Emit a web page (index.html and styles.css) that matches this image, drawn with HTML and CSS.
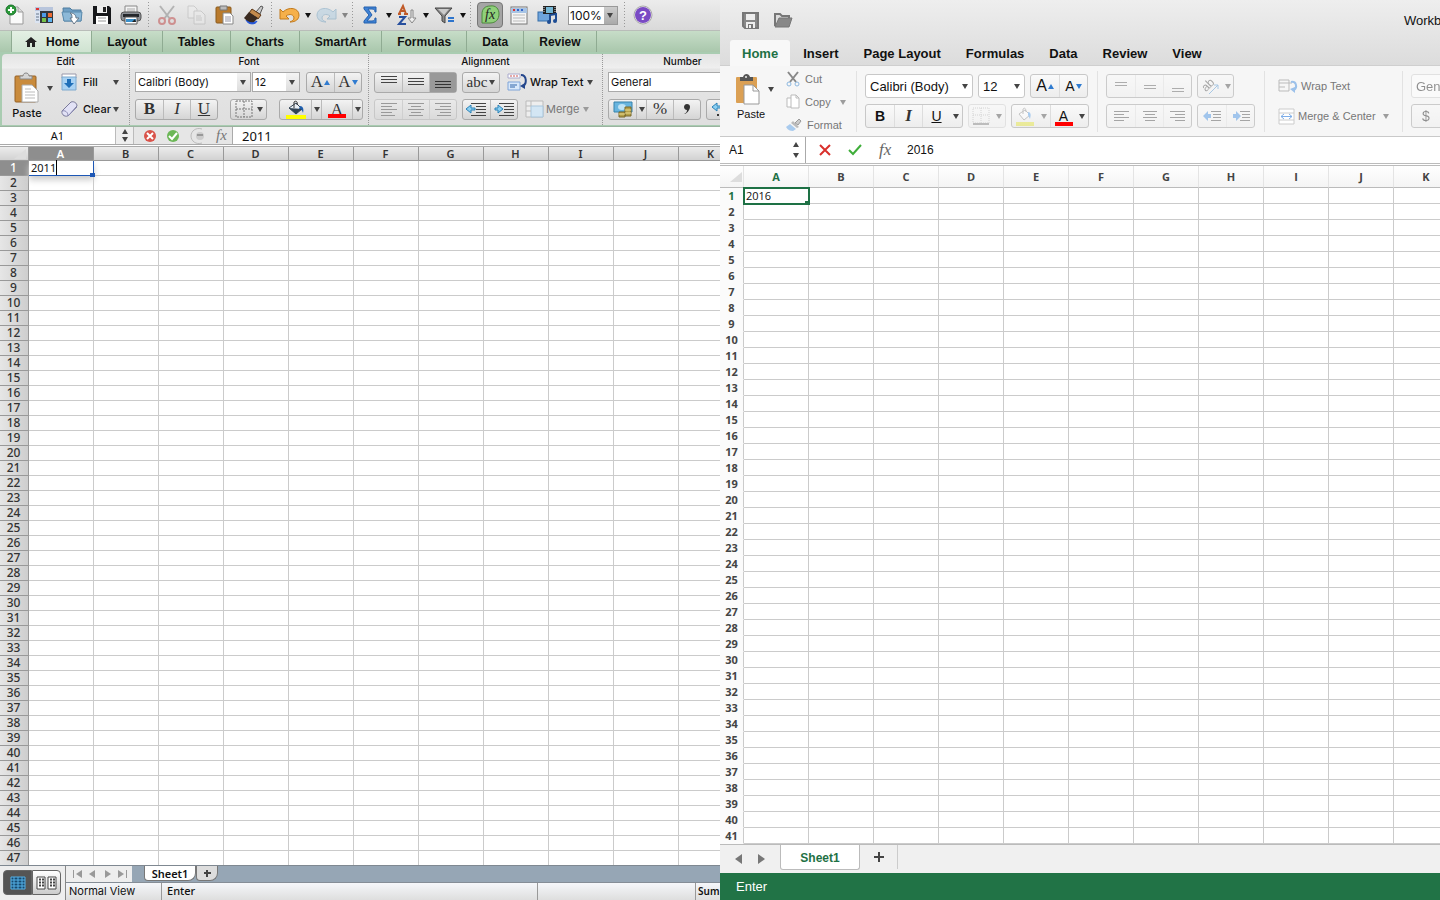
FILE: index.html
```
<!DOCTYPE html>
<html lang="en">
<head>
    <meta charset="UTF-8">
    <meta name="viewport" content="width=device-width, initial-scale=1.0">
    <title>Excel 2011 / Excel 2016</title>
    <link rel="stylesheet" href="styles.css">
</head>
<body>
    <!-- Excel 2011 -->
    <section class="pane old">
        <div class="toolbar">
            <button class="tool" aria-label="New"><svg width="20" height="20" viewBox="0 0 20 20"><path d="M5 2h8l5 5v12H5z" fill="#fafafa" stroke="#999"/><path d="M13 2v5h5" fill="#ddd" stroke="#999"/><circle cx="6" cy="5" r="5" fill="#2c9b3a" stroke="#17702a"/><path d="M6 2v6M3 5h6" stroke="#fff" stroke-width="2"/></svg></button>
            <button class="tool" aria-label="Gallery"><svg width="20" height="20" viewBox="0 0 20 20"><rect x="1" y="2" width="18" height="16" fill="#34363c"/><path d="M1 2h18v4H1z" fill="#b8c5dc"/><path d="M2 3h3v2H2z" fill="#d33"/><path d="M1 6h5v12H1z" fill="#dbe4f2"/><path d="M2 9h3M2 12h3M2 15h3" stroke="#678"/><path d="M8 8h4v4H8z" fill="#4e9be8"/><path d="M14 8h4v4h-4z" fill="#ee6b32"/><path d="M8 13h4v4H8z" fill="#76c24a"/><path d="M14 13h4v4h-4z" fill="#5cb3ee"/></svg></button>
            <button class="tool" aria-label="Open"><svg width="21" height="20" viewBox="0 0 21 20"><path d="M1 3h7l2 2h9v11H2z" fill="#6f9fc4" stroke="#4f7d9f"/><path d="M0 7h20l-1 9H2z" fill="#8db9d8" stroke="#5c8bad"/><path d="M8 8c4 0 6 2 6 5h3l-5 6-4-6h2c0-2 0-4-2-5z" fill="#fff" stroke="#678"/></svg></button>
            <button class="tool" aria-label="Save"><svg width="20" height="20" viewBox="0 0 20 20"><path d="M1 1h16l2 2v16H1z" fill="#17181b"/><path d="M5 1h10v7H5z" fill="#eee"/><path d="M11 2h3v5h-3z" fill="#222"/><path d="M4 11h12v8H4z" fill="#fff"/><path d="M6 13h8M6 16h8" stroke="#999"/></svg></button>
            <button class="tool" aria-label="Print"><svg width="22" height="20" viewBox="0 0 22 20"><path d="M5 1h12v7H5z" fill="#f4f4f4" stroke="#888"/><path d="M7 4h8M7 6h8" stroke="#aaa"/><rect x="1" y="7" width="20" height="9" rx="3" fill="#8b8f94" stroke="#555"/><path d="M3 9h16v3H3z" fill="#24272b"/><path d="M5 12h12v7H5z" fill="#fff" stroke="#555"/><path d="M6 14h10v3H6z" fill="#3a91cc"/><path d="M12 17l3-3 1 3z" fill="#222"/></svg></button>
            <span class="sep"></span>
            <button class="tool faded" aria-label="Cut"><svg width="20" height="20" viewBox="0 0 20 20" fill="none"><path d="M3 1l10 13M17 1L7 14" stroke="#777" stroke-width="2"/><circle cx="5" cy="16" r="3" stroke="#b33" stroke-width="2"/><circle cx="15" cy="16" r="3" stroke="#b33" stroke-width="2"/></svg></button>
            <button class="tool faded" aria-label="Copy"><svg width="20" height="20" viewBox="0 0 20 20" fill="#eee" stroke="#aaa"><path d="M2 1h6l3 3v9H2z"/><path d="M8 6h7l4 4v9H8z"/><path d="M10 11h5M10 13h6M10 15h6"/></svg></button>
            <button class="tool" aria-label="Paste"><svg width="20" height="20" viewBox="0 0 20 20"><rect x="1" y="2" width="15" height="16" rx="1" fill="#b97a2c" stroke="#8a5a1d"/><path d="M5 1h7v4H5z" fill="#bbb" stroke="#777"/><path d="M8 8h7l3 3v8H8z" fill="#fff" stroke="#888"/><path d="M10 12h6M10 14h6M10 16h6" stroke="#99a"/></svg></button>
            <button class="tool" aria-label="Format painter"><svg width="21" height="20" viewBox="0 0 21 20"><path d="M13 7l5-6 2 1-3 7z" fill="#ccc" stroke="#555"/><path d="M3 15c4 2 9 3 11 1-1 4-9 4-11-1z" fill="#2456d8" stroke="#2456d8"/><path d="M9 4l9 6-3 4-9-6z" fill="#c48a4c" stroke="#5c3616"/><path d="M6 7l9 6-4 4c-4 1-7-1-10-4z" fill="#3a2a20"/></svg></button>
            <span class="sep"></span>
            <button class="tool narrow" aria-label="Undo"><svg width="21" height="18" viewBox="0 0 21 18"><path d="M1 3v10h9l-3-3c4-3 8-1 8 2 0 2-2 3-4 4 6 0 9-3 9-7C20 2 10 0 4 6z" fill="#f6b04a" stroke="#c27a1c"/></svg></button>
            <button class="drop" aria-label="Undo history"></button>
            <button class="tool narrow faded" aria-label="Redo"><svg width="21" height="18" viewBox="0 0 21 18"><path d="M20 3v10h-9l3-3c-4-3-8-1-8 2 0 2 2 3 4 4-6 0-9-3-9-7C1 2 11 0 17 6z" fill="#a9cbe2" stroke="#6699bb"/></svg></button>
            <button class="drop faded" aria-label="Redo history"></button>
            <span class="sep"></span>
            <button class="tool narrow" aria-label="AutoSum"><svg width="14" height="18" viewBox="0 0 14 18"><path d="M1 1h12v5h-1c0-2-1-3-3-3H5l4 6-5 6h5c2 0 3-1 3-3h1v5H1v-2l5-6-5-6z" fill="#3f83d6" stroke="#2560ad"/></svg></button>
            <button class="drop" aria-label="AutoSum options"></button>
            <button class="tool narrow" aria-label="Sort"><svg width="21" height="20" viewBox="0 0 21 20" fill="none"><path d="M2 9l4-8 3 8M3 6h5M1 9h3M7 9h4" stroke="#c05a28" stroke-width="2"/><path d="M2 12h6l-6 7h7" stroke="#274f9e" stroke-width="2"/><path d="M14 5h2v8h3l-4 5-4-5h3z" fill="#eee" stroke="#888"/></svg></button>
            <button class="drop" aria-label="Sort options"></button>
            <button class="tool narrow" aria-label="Filter"><svg width="21" height="18" viewBox="0 0 21 18"><path d="M1 2h17l-7 8v7l-3-2v-5z" fill="#888" stroke="#444"/><path d="M4 3h11l-5 6z" fill="#ccc"/><path d="M14 12h6M14 15h6" stroke="#2d74cc" stroke-width="2"/></svg></button>
            <button class="drop" aria-label="Filter options"></button>
            <span class="sep"></span>
            <button class="tool pressed" aria-label="Formula builder"><svg width="21" height="20" viewBox="0 0 21 20"><path d="M10 1c6-1 9 3 9 8s-3 9-9 9H2V9c0-5 3-8 8-8z" fill="#8fd07a" stroke="#4d8a3d"/><text x="5" y="14" class="fx-glyph">fx</text></svg></button>
            <button class="tool" aria-label="Toolbox"><svg width="18" height="19" viewBox="0 0 18 19"><rect x="1" y="1" width="16" height="17" fill="#f5f5f5" stroke="#777"/><path d="M1 2h16v5H1z" fill="#a8c4e4"/><path d="M3 4h2" stroke="#d33" stroke-width="2"/><path d="M7 4h2M11 4h2" stroke="#36c" stroke-width="2"/><path d="M3 9h12M3 12h12M3 15h12" stroke="#bbb"/></svg></button>
            <button class="tool" aria-label="Media"><svg width="21" height="20" viewBox="0 0 21 20"><rect x="1" y="7" width="12" height="9" fill="#6ea4dc" stroke="#376fa9"/><path d="M6 1h13v8H6z" fill="#222"/><path d="M9 2h7v6H9z" fill="#76b8d7"/><path d="M7 2v6M18 2v6" stroke="#ddd" stroke-dasharray="1 1"/><path d="M13 17v-7l6-1v7" fill="none" stroke="#1e4d94" stroke-width="2"/><ellipse cx="12" cy="17" rx="2" ry="2" fill="#1e4d94"/><ellipse cx="18" cy="16" rx="2" ry="2" fill="#1e4d94"/></svg></button>
            <span class="combo zoom"><select aria-label="Zoom"><option>100%</option></select></span>
            <span class="sep"></span>
            <button class="tool" aria-label="Help"><svg width="20" height="20" viewBox="0 0 20 20"><circle cx="10" cy="10" r="9" fill="#eee" stroke="#aaa"/><circle cx="10" cy="10" r="8" fill="#7a4bc4"/><text x="6" y="15" class="help-glyph">?</text></svg></button>
        </div>
        <nav class="tabs">
            <a href="#" class="active"><svg width="12" height="10" viewBox="0 0 12 10"><path d="M6 0l6 5h-2v5H7V6H5v4H2V5H0z" fill="#222"/></svg>Home</a>
            <a href="#">Layout</a>
            <a href="#">Tables</a>
            <a href="#">Charts</a>
            <a href="#">SmartArt</a>
            <a href="#">Formulas</a>
            <a href="#">Data</a>
            <a href="#">Review</a>
        </nav>
        <div class="ribbon">
            <div class="group edit">
                <h2>Edit</h2>
                <div class="group-body">
                    <button class="paste"><svg width="26" height="31" viewBox="0 0 26 31"><rect x="1" y="4" width="21" height="26" rx="1" fill="#c98b3c" stroke="#966124"/><path d="M6 7V4h3c0-4 6-4 6 0h3v3z" fill="#d5d5d5" stroke="#888"/><path d="M8 13h10l6 6v11H8z" fill="#fff" stroke="#aaa"/><path d="M11 17h6M11 20h10M11 23h10M11 26h10" stroke="#bbb"/></svg>Paste</button>
                    <button class="drop" aria-label="Paste options"></button>
                    <div class="rows">
                        <div class="row"><button class="link"><svg width="18" height="18" viewBox="0 0 18 18"><path d="M1 1h14v4H1z" fill="#fff" stroke="#99a"/><path d="M1 4h14v13H1z" fill="#a9d2f3" stroke="#7ea9cd"/><path d="M6 6h4v4h3l-5 5-5-5h3z" fill="#1f6fb8"/></svg>Fill</button><button class="drop" aria-label="Fill options"></button></div>
                        <div class="row"><button class="link"><svg width="18" height="18" viewBox="0 0 18 18"><path d="M1 11L10 2c3-1 6 1 6 4L8 15c-3 3-8 0-7-4z" fill="#e2e2f6" stroke="#7a7a99"/><path d="M1 11c3-1 6 1 6 5l9-9" fill="none" stroke="#8888b0"/></svg>Clear</button><button class="drop" aria-label="Clear options"></button></div>
                    </div>
                </div>
            </div>
            <div class="group font">
                <h2>Font</h2>
                <div class="rows">
                    <div class="row">
                        <span class="combo face"><select aria-label="Font"><option>Calibri (Body)</option></select></span>
                        <span class="combo size"><select aria-label="Font size"><option>12</option></select></span>
                        <span class="btns grow"><button aria-label="Grow font" class="serif">A<i class="up"></i></button><button aria-label="Shrink font" class="serif">A<i class="down"></i></button></span>
                    </div>
                    <div class="row spread">
                        <span class="btns"><button class="serif bold">B</button><button class="serif italic">I</button><button class="serif under">U</button></span>
                        <span class="btns borders"><button aria-label="Borders"><svg width="18" height="18" viewBox="0 0 18 18"><path d="M1 1h16v16H1zM9 1v16M1 9h16" fill="none" stroke="#777" stroke-dasharray="2 1"/></svg><i class="caret"></i></button></span>
                        <span class="btns colors"><button aria-label="Fill color"><svg width="22" height="19" viewBox="0 0 22 19"><path d="M4 8l7-5 6 6-6 5z" fill="#e8eef5" stroke="#345"/><path d="M9 8V2c2-2 4 0 3 3" fill="none" stroke="#333"/><path d="M15 6c3 0 4 3 3 7-1-3-2-4-4-4z" fill="#1f5fae"/><path d="M4 8l13 1-6 5z" fill="#345"/><path d="M1 15h20v4H1z" fill="#ff0"/></svg></button><button class="drop" aria-label="Fill colors"></button><button aria-label="Font color" class="serif color">A</button><button class="drop" aria-label="Font colors"></button></span>
                    </div>
                </div>
            </div>
            <div class="group align">
                <h2>Alignment</h2>
                <div class="rows">
                    <div class="row">
                        <span class="btns"><button aria-label="Top"><svg width="18" height="16" viewBox="0 0 18 16" stroke="#444"><path d="M1 2.500h16M1 5.500h16M1 8.500h16"/></svg></button><button aria-label="Middle"><svg width="18" height="16" viewBox="0 0 18 16" stroke="#444"><path d="M1 4.500h16M1 7.500h16M1 10.500h16"/></svg></button><button aria-label="Bottom" class="on"><svg width="18" height="16" viewBox="0 0 18 16" stroke="#333"><path d="M1 7.500h16M1 10.500h16M1 13.500h16"/></svg></button></span>
                        <span class="btns abc"><button class="serif">abc<i class="caret"></i></button></span>
                        <button class="link wrap"><svg width="21" height="20" viewBox="0 0 21 20"><path d="M1 2h12v4H1z" fill="#fff" stroke="#aac"/><path d="M3 4h8" stroke="#c55" stroke-dasharray="2 1"/><path d="M1 10h12v8H1z" fill="#d8e8fa" stroke="#7fa4d8"/><path d="M3 13h7M3 15h5" stroke="#36a"/><path d="M14 3c6 0 6 9 2 11" fill="none" stroke="#24478c" stroke-width="2"/><path d="M13 14l5-3v6z" fill="#24478c"/></svg>Wrap Text</button><button class="drop" aria-label="Wrap options"></button>
                    </div>
                    <div class="row">
                        <span class="btns off"><button aria-label="Align left"><svg width="18" height="16" viewBox="0 0 18 16" stroke="#444"><path d="M1 2.500h16M1 5.500h11M1 8.500h16M1 11.500h11M1 14.500h14"/></svg></button><button aria-label="Center"><svg width="18" height="16" viewBox="0 0 18 16" stroke="#444"><path d="M1 2.500h16M4 5.500h10M1 8.500h16M4 11.500h10M2 14.500h14"/></svg></button><button aria-label="Align right"><svg width="18" height="16" viewBox="0 0 18 16" stroke="#444"><path d="M1 2.500h16M6 5.500h11M1 8.500h16M6 11.500h11M3 14.500h14"/></svg></button></span>
                        <span class="btns"><button aria-label="Decrease indent"><svg width="21" height="16" viewBox="0 0 21 16"><path d="M5 2.500h15M10 5.500h10M10 8.500h10M10 11.500h10M5 14.500h15" stroke="#444"/><path d="M0 8l5-4v3h4v2H5v3z" fill="#8cd0f2" stroke="#2b82b8"/></svg></button><button aria-label="Increase indent"><svg width="21" height="16" viewBox="0 0 21 16"><path d="M5 2.500h15M10 5.500h10M10 8.500h10M10 11.500h10M5 14.500h15" stroke="#444"/><path d="M9 8L4 4v3H1v2h3v3z" fill="#8cd0f2" stroke="#2b82b8"/></svg></button></span>
                        <button class="link merge"><svg width="19" height="18" viewBox="0 0 19 18"><path d="M1 1h17v16H1z" fill="#eee" stroke="#bbb"/><path d="M6 6h12v11H6z" fill="#d3e6f4" stroke="#a9c6dc"/><path d="M6 1v5M1 6h5M1 11h5" stroke="#bbb"/></svg>Merge</button><button class="drop faded" aria-label="Merge options"></button>
                    </div>
                </div>
            </div>
            <div class="group number">
                <h2>Number</h2>
                <div class="rows">
                    <div class="row"><span class="combo format"><select aria-label="Number format"><option>General</option></select></span></div>
                    <div class="row">
                        <span class="btns"><button aria-label="Currency"><svg width="20" height="17" viewBox="0 0 20 17"><path d="M1 1h18v10H1z" fill="#68b5df" stroke="#3782ab"/><ellipse cx="9" cy="6" rx="4" ry="3" fill="#bfe3f5"/><path d="M6 11h6v5H6zM12 6h6v9h-6z" fill="#b5a04a" stroke="#79682a"/><path d="M6 13h6M12 9h6M12 12h6" stroke="#eadb90"/></svg></button><button class="drop" aria-label="Currencies"></button><button class="serif big">%</button><button class="comma" aria-label="Comma style"><svg width="8" height="12" viewBox="0 0 8 12"><path d="M4 1c3 0 4 3 2 6-1 2-3 4-5 4 2-1 3-2 3-4-4 0-4-6 0-6z" fill="#333"/></svg></button></span>
                        <span class="btns"><button aria-label="Increase decimal"><svg width="20" height="17" viewBox="0 0 20 17"><path d="M1 6l5-4v3h5v2H6v3z" fill="#8cd0f2" stroke="#2b82b8"/><circle cx="7" cy="14" r="1"/><path d="M11 11h3v4h-3z" fill="none" stroke="#333"/></svg></button></span>
                    </div>
                </div>
            </div>
        </div>
        <div class="formula-bar">
            <input class="name-box" value="A1" aria-label="Name box">
            <button class="stepper" aria-label="Names"><i class="up"></i><i class="down"></i></button>
            <div class="actions">
                <button aria-label="Cancel"><svg width="14" height="14" viewBox="0 0 14 14"><circle cx="7" cy="7" r="6" fill="#d9534a"/><path d="M4 4l6 6M10 4l-6 6" stroke="#fff" stroke-width="2"/></svg></button>
                <button aria-label="Enter"><svg width="14" height="14" viewBox="0 0 14 14"><circle cx="7" cy="7" r="6" fill="#6cb757"/><path d="M3 7l3 3 5-6" fill="none" stroke="#fff" stroke-width="2"/></svg></button>
                <button aria-label="More"><svg width="18" height="16" viewBox="0 0 18 16"><path d="M13 1C7-1 2 3 2 8s5 9 11 7" fill="none" stroke="#bbb"/><circle cx="11" cy="8" r="4" fill="#ccc"/><path d="M8 7h6" stroke="#999" stroke-width="2"/></svg></button>
                <button class="fx">fx</button>
            </div>
            <input class="formula" value="2011" aria-label="Formula">
        </div>
        <div class="sheet"><table data-rows="47" data-value="2011"></table></div>
        <footer>
            <div class="views">
                <button class="on" aria-label="Normal view"><svg width="16" height="14" viewBox="0 0 16 14"><path d="M1 1h14v12H1zM1 4h14M1 7h14M1 10h14M4 1v12M8 1v12M12 1v12" fill="#16486e" stroke="#55b0e6"/></svg></button>
                <button aria-label="Page layout view"><svg width="21" height="14" viewBox="0 0 21 14"><path d="M1 1h8v12H1zM12 1h8v12h-8z" fill="#fff" stroke="#444"/><path d="M3 3.500h5M3 6.500h5M3 9.500h5M14 3.500h5M14 6.500h5M14 9.500h5" stroke="#444" stroke-width="2" stroke-dasharray="2 1"/></svg></button>
            </div>
            <div class="bottom">
                <div class="sheet-tabs">
                    <div class="nav"><button aria-label="First"><svg width="9" height="8" viewBox="0 0 9 8"><path d="M0 0h1v8H0zM9 0v8L3 4z"/></svg></button><button aria-label="Previous"><svg width="9" height="8" viewBox="0 0 9 8"><path d="M7 0v8L1 4z"/></svg></button><button aria-label="Next"><svg width="9" height="8" viewBox="0 0 9 8"><path d="M2 0v8l6-4z"/></svg></button><button aria-label="Last"><svg width="9" height="8" viewBox="0 0 9 8"><path d="M8 0h1v8H8zM0 0v8l6-4z"/></svg></button></div>
                    <button class="sheet-tab">Sheet1</button>
                    <button class="add" aria-label="Add sheet"><svg width="9" height="9" viewBox="0 0 9 9"><path d="M4 1v7M1 4h7" stroke="#444" stroke-width="2"/></svg></button>
                </div>
                <div class="status"><span class="view-name">Normal View</span><span class="mode">Enter</span><span class="blank"></span><span class="sum">Sum</span></div>
            </div>
        </footer>
    </section>

    <!-- Excel 2016 -->
    <section class="pane new">
        <header>
            <div class="title-bar">
                <button aria-label="Save"><svg width="17" height="17" viewBox="0 0 17 17"><path d="M1 1h15v15H3l-2-2z" fill="#888" stroke="#777" stroke-width="2"/><path d="M4 2h9v6H4z" fill="#eee"/><path d="M4 10h9v6H4z" fill="#eee"/><path d="M6 12h5v4H6z" fill="#777"/><path d="M7 13h2v3H7z" fill="#eee"/></svg></button>
                <button aria-label="Open"><svg width="19" height="16" viewBox="0 0 19 16"><path d="M1 14V2h5l2 2h7v3" fill="#ddd" stroke="#777" stroke-width="2"/><path d="M5 6h13l-3 9H1z" fill="#888" stroke="#777"/></svg></button>
                <span class="doc">Workbook1</span>
            </div>
            <nav class="tabs">
                <a href="#" class="active">Home</a>
                <a href="#">Insert</a>
                <a href="#">Page Layout</a>
                <a href="#">Formulas</a>
                <a href="#">Data</a>
                <a href="#">Review</a>
                <a href="#">View</a>
            </nav>
        </header>
        <div class="ribbon">
            <div class="group clipboard">
                <button class="paste"><svg width="26" height="32" viewBox="0 0 26 32"><rect x="1" y="4" width="21" height="26" rx="1" fill="#dba054"/><path d="M5 8V4h3c1-4 6-4 7 0h3v4z" fill="#555"/><circle cx="11" cy="4" r="1" fill="#eee"/><path d="M9 12h9l6 6v13H9z" fill="#fff" stroke="#999"/><path d="M18 12v6h6" fill="none" stroke="#999"/></svg>Paste</button>
                <button class="drop" aria-label="Paste options"></button>
                <div class="clip-list">
                    <button class="link"><svg width="14" height="16" viewBox="0 0 14 16" fill="none"><path d="M2 1l8 10M12 1L4 11" stroke="#888" stroke-width="2"/><circle cx="3" cy="13" r="2" stroke="#8db8e0"/><circle cx="11" cy="13" r="2" stroke="#8db8e0"/></svg>Cut</button>
                    <button class="link"><svg width="14" height="16" viewBox="0 0 14 16" fill="#fff" stroke="#bbb"><path d="M1 4h6v9H1z"/><path d="M5 1h5l3 3v10H5z"/><path d="M10 1v3h3" fill="none"/></svg>Copy<i class="caret"></i></button>
                    <button class="link"><svg width="16" height="14" viewBox="0 0 16 14"><path d="M9 5l4-4 2 2-3 4z" fill="#ccc" stroke="#999"/><path d="M7 3l6 6-2 1-6-5z" fill="#bbb"/><path d="M4 6l6 5-3 2c-3 0-5-1-7-4z" fill="#a9cbee"/></svg>Format</button>
                </div>
            </div>
            <div class="group font rows">
                <div class="row">
                    <span class="combo face"><select aria-label="Font"><option>Calibri (Body)</option></select></span>
                    <span class="combo size"><select aria-label="Font size"><option>12</option></select></span>
                    <span class="btns"><button class="letter-lg" aria-label="Grow font">A<i class="up"></i></button><button class="letter" aria-label="Shrink font">A<i class="down"></i></button></span>
                </div>
                <div class="row">
                    <span class="btns biu"><button class="bold">B</button><button class="serif italic">I</button><button class="under">U</button><button class="drop" aria-label="Underline options"></button></span>
                    <span class="btns off pair"><button aria-label="Borders"><svg width="18" height="18" viewBox="0 0 18 18"><path d="M1 1h16v15H1zM9 1v15M1 8h16" fill="none" stroke="#aaa" stroke-dasharray="1 1"/><path d="M1 17h16" stroke="#777" stroke-width="2"/></svg></button><button class="drop" aria-label="Border options"></button></span>
                    <span class="btns pair wide"><button class="off" aria-label="Fill color"><svg width="18" height="19" viewBox="0 0 18 19"><path d="M3 7l6-4 5 5-6 5z" fill="#fff" stroke="#888"/><path d="M7 7V2c2-2 3 0 3 3" fill="none" stroke="#888"/><path d="M12 5c3 0 3 3 2 7l-2-4z" fill="#4e9be8"/><path d="M0 15h18v4H0z" fill="#e5e534"/></svg></button><button class="drop off" aria-label="Fill colors"></button><button class="color" aria-label="Font color">A</button><button class="drop" aria-label="Font colors"></button></span>
                </div>
            </div>
            <div class="group align rows">
                <div class="row off">
                    <span class="btns"><button aria-label="Top"><svg width="16" height="14" viewBox="0 0 16 14" stroke="#555"><path d="M2 3.500h12M2 6.500h12"/></svg></button><button aria-label="Middle"><svg width="16" height="14" viewBox="0 0 16 14" stroke="#555"><path d="M2 6.500h12M2 9.500h12"/></svg></button><button aria-label="Bottom"><svg width="16" height="14" viewBox="0 0 16 14" stroke="#555"><path d="M2 9.500h12M2 12.500h12"/></svg></button></span>
                    <span class="btns orient"><button aria-label="Orientation"><svg width="20" height="20" viewBox="0 0 20 20"><text x="1" y="13" transform="rotate(-45 7 10)" class="ab-glyph">ab</text><path d="M8 18l9-9M13 9h4v4" fill="none" stroke="#4a90d0"/></svg><i class="caret"></i></button></span>
                </div>
                <div class="row off">
                    <span class="btns"><button aria-label="Align left"><svg width="16" height="14" viewBox="0 0 16 14" stroke="#444"><path d="M1 2.500h15M1 5.500h10M1 8.500h15M1 11.500h10"/></svg></button><button aria-label="Center"><svg width="16" height="14" viewBox="0 0 16 14" stroke="#444"><path d="M1 2.500h14M3 5.500h10M1 8.500h14M3 11.500h10"/></svg></button><button aria-label="Align right"><svg width="16" height="14" viewBox="0 0 16 14" stroke="#444"><path d="M0 2.500h15M5 5.500h10M0 8.500h15M5 11.500h10"/></svg></button></span>
                    <span class="btns"><button aria-label="Decrease indent"><svg width="18" height="14" viewBox="0 0 18 14"><path d="M8 2.500h10M10 5.500h8M10 8.500h8M8 11.500h10" stroke="#444"/><path d="M0 7l5-5v3h3v4H5v3z" fill="#3b8be0"/></svg></button><button aria-label="Increase indent"><svg width="18" height="14" viewBox="0 0 18 14"><path d="M8 2.500h10M10 5.500h8M10 8.500h8M8 11.500h10" stroke="#444"/><path d="M9 7L4 2v3H1v4h3v3z" fill="#3b8be0"/></svg></button></span>
                </div>
            </div>
            <div class="group merge rows">
                <div class="row"><button class="link"><svg width="20" height="16" viewBox="0 0 20 16"><path d="M1 2h10v11H1zM1 5h13M1 9h6" fill="none" stroke="#bbb"/><path d="M13 4c5-1 7 5 3 8" fill="none" stroke="#9cc1ea" stroke-width="2"/><path d="M12 11l5-2v6z" fill="#9cc1ea"/></svg>Wrap Text</button></div>
                <div class="row"><button class="link"><svg width="17" height="17" viewBox="0 0 17 17"><path d="M1 1h15v15H1zM1 5h15M1 12h15" fill="#fff" stroke="#ccc"/><path d="M3 8.500h11M6 6L3 8.500 6 11M11 6l3 2.500L11 11" fill="none" stroke="#7faee8"/></svg>Merge &amp; Center<i class="caret"></i></button></div>
            </div>
            <div class="group number rows">
                <div class="row off"><span class="combo format"><select aria-label="Number format"><option>General</option></select></span></div>
                <div class="row off"><span class="btns"><button class="dollar">$</button><button aria-label="Percent">%</button></span></div>
            </div>
        </div>
        <div class="formula-bar">
            <input class="name-box" value="A1" aria-label="Name box">
            <button class="stepper" aria-label="Names"><i class="up"></i><i class="down"></i></button>
            <div class="actions">
                <button aria-label="Cancel"><svg width="12" height="12" viewBox="0 0 12 12"><path d="M1 1l10 10M11 1L1 11" stroke="#d9302c" stroke-width="2"/></svg></button>
                <button aria-label="Enter"><svg width="14" height="12" viewBox="0 0 14 12"><path d="M1 6l4 4 8-9" fill="none" stroke="#3fae3a" stroke-width="2"/></svg></button>
                <button class="fx">fx</button>
            </div>
            <input class="formula" value="2016" aria-label="Formula">
        </div>
        <div class="sheet"><table data-rows="41" data-value="2016"></table></div>
        <div class="sheet-tabs">
            <div class="nav"><button aria-label="Previous"><svg width="8" height="10" viewBox="0 0 8 10"><path d="M7 0v10L0 5z"/></svg></button><button aria-label="Next"><svg width="8" height="10" viewBox="0 0 8 10"><path d="M1 0v10l7-5z"/></svg></button></div>
            <button class="sheet-tab">Sheet1</button>
            <button class="add" aria-label="Add sheet"><svg width="10" height="10" viewBox="0 0 10 10"><path d="M5 0v10M0 5h10" stroke="#444" stroke-width="2"/></svg></button>
        </div>
        <footer class="status">Enter</footer>
    </section>
    <script src="script.js"></script>
</body>
</html>
```
FILE: styles.css
```
* {
    box-sizing: border-box;
}

body {
    margin: 0;
    height: 100vh;
    display: grid;
    grid-template-columns: 1fr 1fr;
    overflow: hidden;
    font-family: "Liberation Sans", Arial, sans-serif;
    font-size: 11px;
    color: #111;
}

button, input, select {
    font: inherit;
    color: inherit;
    margin: 0;
    padding: 0;
    border: 0;
    background: none;
    border-radius: 0;
}

button {
    display: flex;
    align-items: center;
    justify-content: center;
    white-space: nowrap;
}

select {
    appearance: none;
    width: 100%;
    height: 100%;
}

a {
    color: inherit;
    text-decoration: none;
}

h2 {
    margin: 0;
    font-size: 10px;
    font-weight: 500;
    text-align: center;
    line-height: 15px;
}

svg {
    flex: none;
    overflow: visible;
}

.pane {
    display: flex;
    flex-direction: column;
    min-width: 0;
    overflow: hidden;
    background: #fff;
}

.sheet {
    flex: 1;
    min-height: 0;
    overflow: hidden;
}

.faded, .off {
    opacity: 0.45;
}

/* small triangles */
.drop::after, .caret, .combo::after, .down {
    content: "";
    flex: none;
    border: 3px solid transparent;
    border-top: 5px solid #444;
    border-bottom: 0;
}

.up {
    border: 3px solid transparent;
    border-bottom: 5px solid #444;
    border-top: 0;
}

.caret {
    margin-left: 4px;
}

.combo {
    position: relative;
    flex: none;
    background: #fff;
}

.combo::after {
    position: absolute;
    right: 4px;
    top: 50%;
    margin-top: -2px;
    pointer-events: none;
}

.serif {
    font-family: "Liberation Serif", Times, serif;
    font-size: 18px;
    color: #333;
}

.bold { font-weight: bold; }
.italic { font-style: italic; }
.under { text-decoration: underline; }

.fx {
    font: italic 17px "Liberation Serif", Times, serif;
    color: #666;
}

.fx-glyph {
    font: italic 14px "Liberation Serif", serif;
    fill: #222;
}

.help-glyph {
    font: bold 13px "Liberation Sans", sans-serif;
    fill: #fff;
}

.ab-glyph {
    font: 12px "Liberation Sans", sans-serif;
    fill: #444;
}

.ribbon, .row, .btns, .formula-bar, .actions, .nav, .sheet-tabs {
    display: flex;
}

.row {
    align-items: center;
}

.group {
    flex: none;
}

.btns {
    flex: none;
    border-radius: 3px;
}

.btns button + button {
    border-left: 1px solid #bbb;
}

.color {
    position: relative;
    line-height: 1;
}

.color::before {
    content: "";
    position: absolute;
    left: 50%;
    bottom: 1px;
    width: 18px;
    height: 4px;
    margin-left: -9px;
    background: #f00;
}

/* grid */
table {
    border-collapse: separate;
    border-spacing: 0;
    table-layout: fixed;
    width: 0;
}

th, td {
    padding: 0;
    white-space: nowrap;
    border-right: 1px solid #cbcbcb;
    border-bottom: 1px solid #cbcbcb;
}

.col {
    width: 65px;
}

td.active {
    position: relative;
}

td.active::after {
    content: "";
    position: absolute;
    right: -2px;
    bottom: -2px;
    width: 5px;
    height: 4px;
}

/* Excel 2011 */
.old {
    font-family: Inter, "Liberation Sans", sans-serif;
}

.old .toolbar {
    display: flex;
    align-items: center;
    flex: none;
    height: 31px;
    background: linear-gradient(#ececec, #d9d9d9);
    border-bottom: 1px solid #b9bdb9;
}

.tool {
    flex: none;
    width: 29px;
    height: 26px;
}

.tool.narrow {
    width: 28px;
}

.tool.pressed {
    width: 26px;
    margin: 0 1px 0 3px;
    background: #a5a5a5;
    border: 1px solid #777;
    border-radius: 4px;
}

.drop {
    flex: none;
    width: 9px;
}

.toolbar .drop::after {
    border-top-color: #111;
}

.sep {
    flex: none;
    width: 7px;
    height: 26px;
    background: linear-gradient(90deg, transparent 3px, #999 3px, #999 4px, transparent 4px);
    -webkit-mask: repeating-linear-gradient(#000 0, #000 1px, transparent 1px, transparent 3px);
}

.combo.zoom {
    width: 50px;
    height: 19px;
    margin: 0 3px 0 6px;
    border: 1px solid #999;
    font-size: 12px;
}

.old .combo select {
    padding-left: 2px;
    background: linear-gradient(#f4f4f4, #ddd) right / 13px 100% no-repeat;
}

.old .combo.zoom select {
    padding-left: 1px;
    background-image: linear-gradient(#ccc, #aaa);
}

.old .tabs {
    display: flex;
    flex: none;
    height: 21px;
    padding-left: 11px;
    background: linear-gradient(#c7ddc8, #a9c7ac);
    font-family: "Liberation Sans", Arial, sans-serif;
    font-size: 12px;
    font-weight: bold;
}

.old .tabs a {
    display: flex;
    align-items: center;
    padding: 0 15px;
    border-right: 1px solid #8fab92;
}

.old .tabs .active {
    gap: 9px;
    padding: 0 12px 0 13px;
    background: linear-gradient(#e4f0e4, #cfe3d1);
    border-left: 1px solid #8fab92;
}

.old .ribbon {
    flex: none;
    height: 75px;
    padding: 2px 0 1px 2px;
    background: #a9ccb1;
    border-bottom: 1px solid #9bb3a0;
}

.old .group {
    height: 71px;
    padding: 0 5px;
    background: linear-gradient(#e4e4e4, #efefef 14px, #e6e6e6 15px, #dfdfdf);
    border-right: 1px dotted #999;
}

.old .edit {
    width: 128px;
    border-radius: 4px 0 0 0;
}

.old .group.font { width: 239px; }
.old .group.align { width: 234px; }
.old .group.number { width: 160px; }

.group-body {
    display: flex;
}

.paste {
    flex: none;
    flex-direction: column;
}

.old .paste {
    width: 40px;
    height: 54px;
    gap: 3px;
    font-weight: 500;
}

.old .group-body > .drop {
    width: 6px;
    height: 38px;
}

.old .rows {
    display: flex;
    flex-direction: column;
    gap: 7px;
    padding-top: 3px;
}

.old .edit .rows {
    padding-left: 8px;
}

.old .row {
    height: 20px;
}

.link {
    gap: 5px;
}

.old .link {
    gap: 4px;
    font-weight: 500;
}

.old .edit .link {
    width: 50px;
    justify-content: flex-start;
}

.old .combo.face,
.old .combo.size,
.old .combo.format {
    height: 20px;
    border: 1px solid #aaa;
}

.old .face {
    width: 116px;
    margin-right: 1px;
}

.old .size { width: 48px; }
.old .format { width: 150px; }

.old .btns {
    height: 21px;
    border: 1px solid #aaa;
    background: linear-gradient(#f3f3f3, #d5d5d5);
}

.old .btns button {
    width: 27px;
}

.old .btns .drop {
    width: 10px;
}

.old .grow {
    margin-left: 6px;
}

.old .btns i.up,
.old .btns i.down,
.new .btns i.up,
.new .btns i.down {
    border-bottom-color: #2f7bd0;
    border-top-color: #2f7bd0;
    margin-left: 1px;
}

.old .btns .serif {
    font-size: 17px;
}

.old .spread {
    gap: 12px;
}

.old .btns.borders button {
    width: 35px;
}

.old .colors button {
    width: 31px;
}

.old .align .row {
    gap: 5px;
}

.old .align .link {
    gap: 2px;
    margin-left: 2px;
}

.old .align .drop {
    margin-left: -3px;
}

.old .align .btns button.on {
    background: #999;
}

.old .btns.abc button {
    width: 36px;
    font-size: 15px;
}

.old .abc .caret {
    margin-left: 2px;
}

.old .link.merge {
    font-weight: 400;
    color: #777;
}

.old .number .row {
    gap: 5px;
}

.old .formula-bar {
    flex: none;
    height: 20px;
    border-bottom: 3px double #aaa;
    font-family: "Noto Sans", sans-serif;
}

.old .name-box {
    width: 115px;
    text-align: center;
}

.stepper {
    flex: none;
    flex-direction: column;
    gap: 3px;
}

.old .stepper {
    width: 18px;
    background: #eee;
    border-left: 1px solid #bbb;
}

.old .actions {
    width: 100px;
    padding-left: 9px;
    gap: 9px;
    background: #e6e6e6;
    border-left: 1px solid #bbb;
    border-right: 1px solid #aaa;
}

.old .fx {
    font-size: 15px;
    color: #777;
}

.formula {
    flex: 1;
    min-width: 0;
}

.old .formula {
    padding-left: 9px;
    font-size: 13px;
}

.old table {
    font: 11px "Noto Sans", sans-serif;
}

.old th {
    height: 15px;
    padding-right: 1px;
    line-height: 14px;
    font-size: 12px;
    font-weight: 500;
    color: #333;
    background: linear-gradient(90deg, #e6e6e6, #cecece);
    border-color: #999;
}

.old thead th {
    height: 14px;
    line-height: 13px;
    font-size: 11px;
    font-weight: 600;
    background: linear-gradient(#ececec, #d2d2d2);
}

.old .corner {
    width: 29px;
}

.old td {
    line-height: 14px;
    padding-left: 2px;
}

.old .current,
.old thead .current {
    color: #fff;
    background: #8e8e8e;
}

.old td.active {
    border-right: 1px solid #1d57b5;
    border-bottom: 1px solid #1d57b5;
    box-shadow: 0 4px 6px #ccc;
}

.old td.active span {
    border-right: 1px solid #000;
}

.old td.active::after {
    background: #1d57b5;
}

.old footer {
    display: flex;
    flex: none;
    height: 35px;
    border-top: 1px solid #7f8891;
}

.views {
    display: flex;
    flex: none;
    width: 66px;
    padding: 4px 4px 5px 3px;
    background: #eee;
    border-right: 1px solid #888;
}

.views button {
    width: 29px;
    border: 1px solid #666;
    border-radius: 0 4px 4px 0;
    background: linear-gradient(#fff, #ccc);
}

.views .on {
    border-radius: 4px 0 0 4px;
    background: #555;
}

.bottom {
    flex: 1;
    min-width: 0;
}

.old .sheet-tabs {
    height: 17px;
    background: #96a6b5;
    border-bottom: 1px solid #858d96;
}

.old .nav {
    width: 66px;
    padding-left: 7px;
    gap: 6px;
    background: #eee;
    fill: #999;
}

.old .sheet-tab {
    width: 52px;
    height: 15px;
    margin-left: 12px;
    background: #fff;
    border: 1px solid #777;
    border-top: 0;
    border-radius: 0 0 8px 4px;
    font-family: "Noto Sans", sans-serif;
    font-weight: 600;
}

.old .add {
    width: 22px;
    height: 15px;
    background: #ddd;
    border: 1px solid #777;
    border-top: 0;
    border-radius: 0 0 8px 4px;
}

.old .status {
    display: flex;
    height: 17px;
    line-height: 16px;
    background: linear-gradient(#f5f7fa, #dedede);
    font-family: "Noto Sans", sans-serif;
}

.old .status span {
    flex: none;
    padding-left: 3px;
}

.old .status .view-name {
    width: 95px;
    font-family: Inter, sans-serif;
}

.old .status .mode {
    flex: 1;
    padding-left: 5px;
    border-left: 1px solid #999;
    font-weight: 500;
}

.old .status .blank {
    width: 158px;
    border-left: 1px solid #999;
}

.old .status .sum {
    width: 25px;
    padding-left: 2px;
    border-left: 1px solid #999;
    font-size: 10px;
    font-weight: 600;
}

/* Excel 2016 */
.new header {
    flex: none;
    height: 66px;
    background: linear-gradient(#eee, #dcdcdc);
    border-bottom: 1px solid #cfcfcf;
}

.new .title-bar {
    display: flex;
    align-items: center;
    height: 40px;
    padding-left: 22px;
    gap: 15px;
}

.new .doc {
    width: 36px;
    margin-left: auto;
    font-size: 13px;
    white-space: nowrap;
}

.new .tabs {
    display: flex;
    height: 26px;
    padding-left: 10px;
    font-size: 13px;
    font-weight: bold;
}

.new .tabs a {
    display: flex;
    align-items: center;
    padding: 0 13px 0 12px;
}

.new .tabs .active {
    padding-right: 12px;
    margin-right: 1px;
    color: #1e7145;
    background: #f8f8f8;
    border-radius: 3px 3px 0 0;
}

.new .ribbon {
    flex: none;
    height: 71px;
    background: #f6f6f6;
    border-bottom: 1px solid #c9c9c9;
}

.new .group {
    margin: 5px 0 4px;
    padding: 3px 8px 0;
    border-right: 1px solid #e2e2e2;
}

.new .rows {
    display: flex;
    flex-direction: column;
    gap: 6px;
}

.new .row {
    gap: 5px;
    height: 24px;
}

.new .clipboard {
    display: flex;
    width: 137px;
    padding: 0;
}

.new .paste {
    width: 46px;
    height: 50px;
    margin-left: 8px;
    gap: 3px;
}

.new .paste svg {
    margin-right: 6px;
}

.new .clipboard > .drop {
    width: 10px;
    height: 36px;
    margin: 0 8px 0 -8px;
}

.clip-list {
    display: flex;
    flex-direction: column;
    gap: 7px;
    padding-left: 2px;
    color: #777;
}

.clip-list .link {
    height: 16px;
    justify-content: flex-start;
}

.clip-list .caret {
    opacity: 0.5;
}

.new .combo, .new .btns {
    height: 24px;
    border: 1px solid #c8c8c8;
    border-radius: 3px;
    font-size: 13px;
}

.new .combo select {
    padding-left: 4px;
}

.new .face { width: 108px; }
.new .size { width: 47px; }
.new .format { width: 110px; }

.new .btns {
    background: linear-gradient(#fafafa, #ededed);
}

.new .btns button {
    width: 28px;
    font-size: 14px;
}

.new .btns button + button {
    border-color: #ddd;
}

.new .btns .drop {
    width: 12px;
    border: 0;
}

.new .pair button { width: 24px; }
.new .wide button { width: 26px; }
.new .btns .letter-lg { font-size: 16px; }

.new .off .btns {
    border-color: #999;
}

.new .btns .serif {
    font-size: 17px;
    font-weight: bold;
}

.new .btns.orient button {
    width: 35px;
}

.new .group.align {
    padding-right: 9px;
}

.new .group.merge {
    width: 138px;
    padding-left: 13px;
    color: #777;
}

.new .group.merge .link {
    gap: 3px;
}

.new .group.merge .caret {
    opacity: 0.5;
}

.new .formula-bar {
    flex: none;
    height: 29px;
    border-bottom: 3px double #bbb;
    font-size: 13px;
}

.new .name-box {
    width: 66px;
    padding-left: 9px;
    font-size: 12px;
}

.new .stepper {
    width: 20px;
    gap: 6px;
    border-right: 1px solid #aaa;
}

.new .actions {
    width: 95px;
    padding-left: 13px;
    gap: 17px;
}

.new .formula {
    padding-left: 6px;
    font-size: 12px;
}

.new table {
    font: 11px "Open Sans", sans-serif;
}

.new th {
    height: 16px;
    line-height: 15px;
    font-weight: 700;
    color: #444;
    background: #fbfbfb;
    border-bottom-color: #fbfbfb;
}

.new thead th {
    height: 22px;
    line-height: 21px;
    background: linear-gradient(#fff, #f4f4f4);
    border-right-color: #e4e4e4;
    border-bottom-color: #bbb;
}

.new .corner {
    width: 24px;
}

.new td {
    line-height: 15px;
    padding-left: 2px;
}

.new .current {
    color: #1e7145;
}

.new td.active {
    outline: 2px solid #1e7145;
    outline-offset: -1px;
}

.new td.active::after {
    background: #1e7145;
}

.corner svg {
    display: block;
    margin-left: auto;
}

.new .sheet-tabs {
    flex: none;
    height: 29px;
    background: #f0f0f0;
    border-top: 1px solid #bbb;
}

.new .nav {
    width: 60px;
    padding-left: 15px;
    gap: 14px;
    fill: #777;
}

.new .sheet-tab {
    width: 80px;
    height: 25px;
    padding-top: 2px;
    color: #1e7145;
    background: #fff;
    border: 1px solid #bbb;
    border-top: 0;
    border-radius: 0 0 3px 3px;
    font-size: 12px;
    font-weight: bold;
}

.new .add {
    width: 38px;
    height: 24px;
    border-right: 1px solid #ccc;
}

.new .status {
    flex: none;
    height: 27px;
    padding-left: 16px;
    line-height: 28px;
    color: #fff;
    background: #217346;
    font-size: 13px;
}
```
FILE: script.js
```
const columns = 'ABCDEFGHIJK'.split('');
const corner = '<svg width="13" height="10" viewBox="0 0 13 10"><path d="M12 0v10H0z" fill="#ddd"/></svg>';

document.querySelectorAll('table').forEach(table => {
    const rows = Number(table.dataset.rows);

    let html = `<thead><tr><th class="corner">${corner}</th>`;
    columns.forEach((name, i) => {
        html += `<th class="col${i === 0 ? ' current' : ''}">${name}</th>`;
    });
    html += '</tr></thead><tbody>';

    for (let r = 1; r <= rows; r++) {
        html += `<tr><th class="${r === 1 ? 'current' : ''}">${r}</th>`;
        columns.forEach((name, i) => {
            // A1 is the cell being edited
            html += r === 1 && i === 0
                ? `<td class="active"><span>${table.dataset.value}</span></td>`
                : '<td></td>';
        });
        html += '</tr>';
    }

    table.innerHTML = html + '</tbody>';
});
```
